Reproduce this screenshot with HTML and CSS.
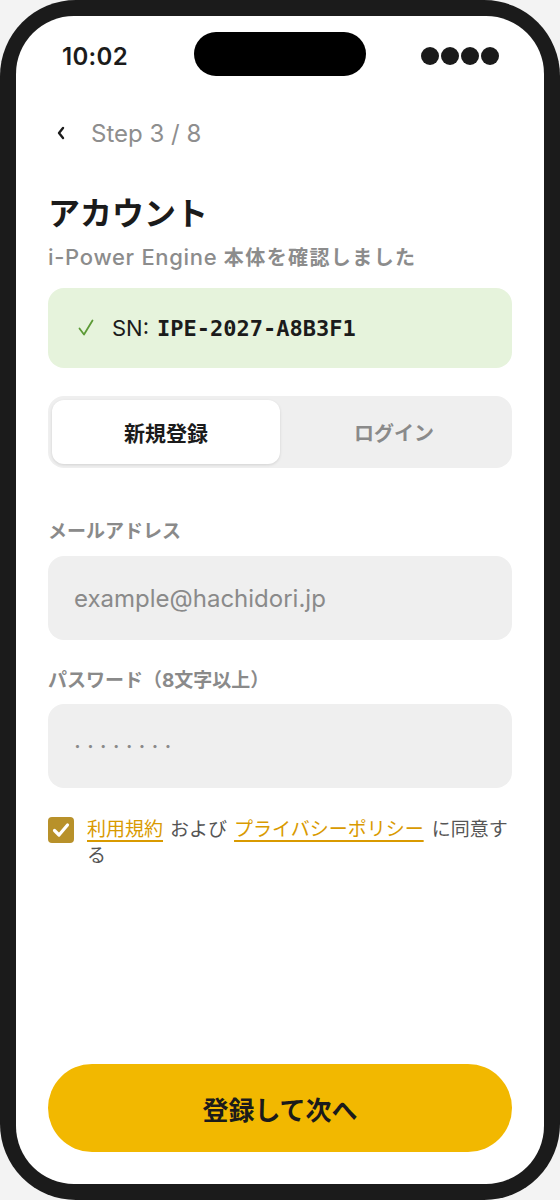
FILE: index.html
```html
<!DOCTYPE html>
<html lang="ja">
<head>
<meta charset="utf-8">
<title>アカウント</title>
<link rel="stylesheet" href="styles.css">
</head>
<body>
<div class="phone">
  <div class="screen">
    <div class="island"></div>
    <div class="status">
      <span class="time">10:02</span>
      <span class="dots"><i></i><i></i><i></i><i></i></span>
    </div>

    <div class="step">
      <svg class="back" width="10" height="14" viewBox="0 0 10 14"><path d="M7 2 L3 7 L7 12" fill="none" stroke="#1b1b1b" stroke-width="2.4" stroke-linecap="round" stroke-linejoin="round"/></svg>
      <span class="step-text">Step 3 / 8</span>
    </div>

    <h1 class="title">アカウント</h1>
    <p class="subtitle"><span class="sub-en">i-Power Engine</span> 本体を確認しました</p>

    <div class="sn-box">
      <svg class="check" width="16" height="18" viewBox="0 0 16 18"><path d="M1.5 9.5 L6 15.5 L14.5 1.5" fill="none" stroke="#5c9a36" stroke-width="1.8" stroke-linecap="round" stroke-linejoin="round"/></svg>
      <span class="sn-label">SN:</span>
      <span class="sn-code">IPE-2027-A8B3F1</span>
    </div>

    <div class="segment">
      <div class="seg-item active">新規登録</div>
      <div class="seg-item">ログイン</div>
    </div>

    <label class="label label-email">メールアドレス</label>
    <div class="field"><span class="placeholder">example@hachidori.jp</span></div>

    <label class="label label-pass">パスワード（8文字以上）</label>
    <div class="field field-pass"><span class="pass-dots">········</span></div>

    <div class="agree">
      <span class="box">
        <svg width="18" height="16" viewBox="0 0 18 16"><path d="M2.5 8.5 L7 13 L15.5 3" fill="none" stroke="#fff" stroke-width="3.2" stroke-linecap="round" stroke-linejoin="round"/></svg>
      </span>
      <p class="agree-text"><a class="link">利用規約</a><span class="plain">および</span><a class="link link-last">プライバシーポリシー</a><span>に同意す</span><span>る</span></p>
    </div>

    <div class="spacer"></div>

    <button class="primary">登録して次へ</button>
  </div>
</div>
</body>
</html>
```

FILE: styles.css
```css
* { box-sizing: border-box; }
html, body { margin: 0; padding: 0; }
body {
  background: #f3f3f3;
  font-family: "Inter", "Noto Sans CJK JP", sans-serif;
  color: #1b1b1b;
}
.phone {
  width: 560px;
  height: 1200px;
  background: #1b1b1b;
  border-radius: 76px;
  padding: 16px;
}
.screen {
  position: relative;
  height: 100%;
  background: #fff;
  border-radius: 58px;
  padding: 16px 32px 32px;
  display: flex;
  flex-direction: column;
}
.island {
  position: absolute;
  top: 16px;
  left: 178px;
  width: 172px;
  height: 44px;
  border-radius: 22px;
  background: #000;
}
.status {
  height: 44px;
  display: flex;
  align-items: center;
  justify-content: space-between;
  padding: 4px 13px 0 14px;
}
.time {
  font-size: 24px;
  font-weight: 600;
  letter-spacing: 0.3px;
}
.dots { display: flex; gap: 2px; }
.dots i {
  display: block;
  width: 18px;
  height: 18px;
  border-radius: 50%;
  background: #1b1b1b;
}
.step {
  margin-top: 42px;
  height: 30px;
  display: flex;
  align-items: center;
  gap: 25px;
  padding-left: 8px;
}
.back { flex: none; }
.step-text {
  font-size: 24px;
  color: #8e8e8e;
}
.title {
  margin: 42px 0 0;
  font-size: 32px;
  line-height: 48px;
  font-weight: 700;
}
.subtitle {
  margin: 6px 0 0;
  height: 26px;
  font-size: 20px;
  line-height: 26px;
  font-weight: 600;
  letter-spacing: 1.4px;
  color: #8c8c8c;
}
.sub-en {
  font-size: 22px;
  font-weight: 500;
  letter-spacing: 0.7px;
}
.sn-box {
  margin-top: 18px;
  height: 80px;
  background: #e6f3dc;
  border-radius: 16px;
  display: flex;
  align-items: center;
  padding-left: 30px;
}
.check { margin-right: 18px; }
.sn-label { font-size: 22px; margin-right: 8px; }
.sn-code {
  font-family: "DejaVu Sans Mono", "Liberation Mono", monospace;
  font-weight: 700;
  font-size: 22px;
}
.segment {
  margin-top: 28px;
  height: 72px;
  background: #efefef;
  border-radius: 16px;
  padding: 4px;
  display: grid;
  grid-template-columns: 1fr 1fr;
}
.seg-item {
  display: flex;
  align-items: center;
  justify-content: center;
  font-size: 20px;
  font-weight: 700;
  color: #8a8a8a;
  border-radius: 12px;
}
.seg-item.active {
  background: #fff;
  color: #1b1b1b;
  font-size: 21px;
  box-shadow: 0 1px 3px rgba(0,0,0,0.12);
}
.label {
  display: block;
  font-size: 19px;
  line-height: 24px;
  font-weight: 700;
  color: #8a8a8a;
}
.label-email { margin-top: 52px; }
.label-pass { margin-top: 29px; }
.field {
  margin-top: 12px;
  height: 84px;
  background: #efefef;
  border-radius: 16px;
  display: flex;
  align-items: center;
  padding-left: 26px;
}
.field-pass { margin-top: 11px; }
.placeholder {
  font-size: 24px;
  color: #8a8a8a;
}
.pass-dots {
  font-size: 24px;
  letter-spacing: 6px;
  color: #8a8a8a;
}
.agree {
  margin-top: 29px;
  display: flex;
  align-items: flex-start;
  gap: 13px;
}
.box {
  flex: none;
  width: 26px;
  height: 26px;
  border-radius: 4px;
  background: #b8912a;
  display: flex;
  align-items: center;
  justify-content: center;
}
.agree-text {
  margin: 0;
  font-size: 19px;
  line-height: 26px;
  color: #555;
}
.plain { margin: 0 7px; }
.link {
  color: #d99a00;
  text-decoration: underline;
  text-decoration-thickness: 2px;
  text-underline-offset: 4px;
}
.link-last { margin-right: 8px; }
.spacer { flex: 1; }
.primary {
  height: 88px;
  border: none;
  border-radius: 44px;
  background: #f2b800;
  color: #1b1b1b;
  font-family: "Inter", "Noto Sans CJK JP", sans-serif;
  font-size: 26px;
  font-weight: 700;
}
```
